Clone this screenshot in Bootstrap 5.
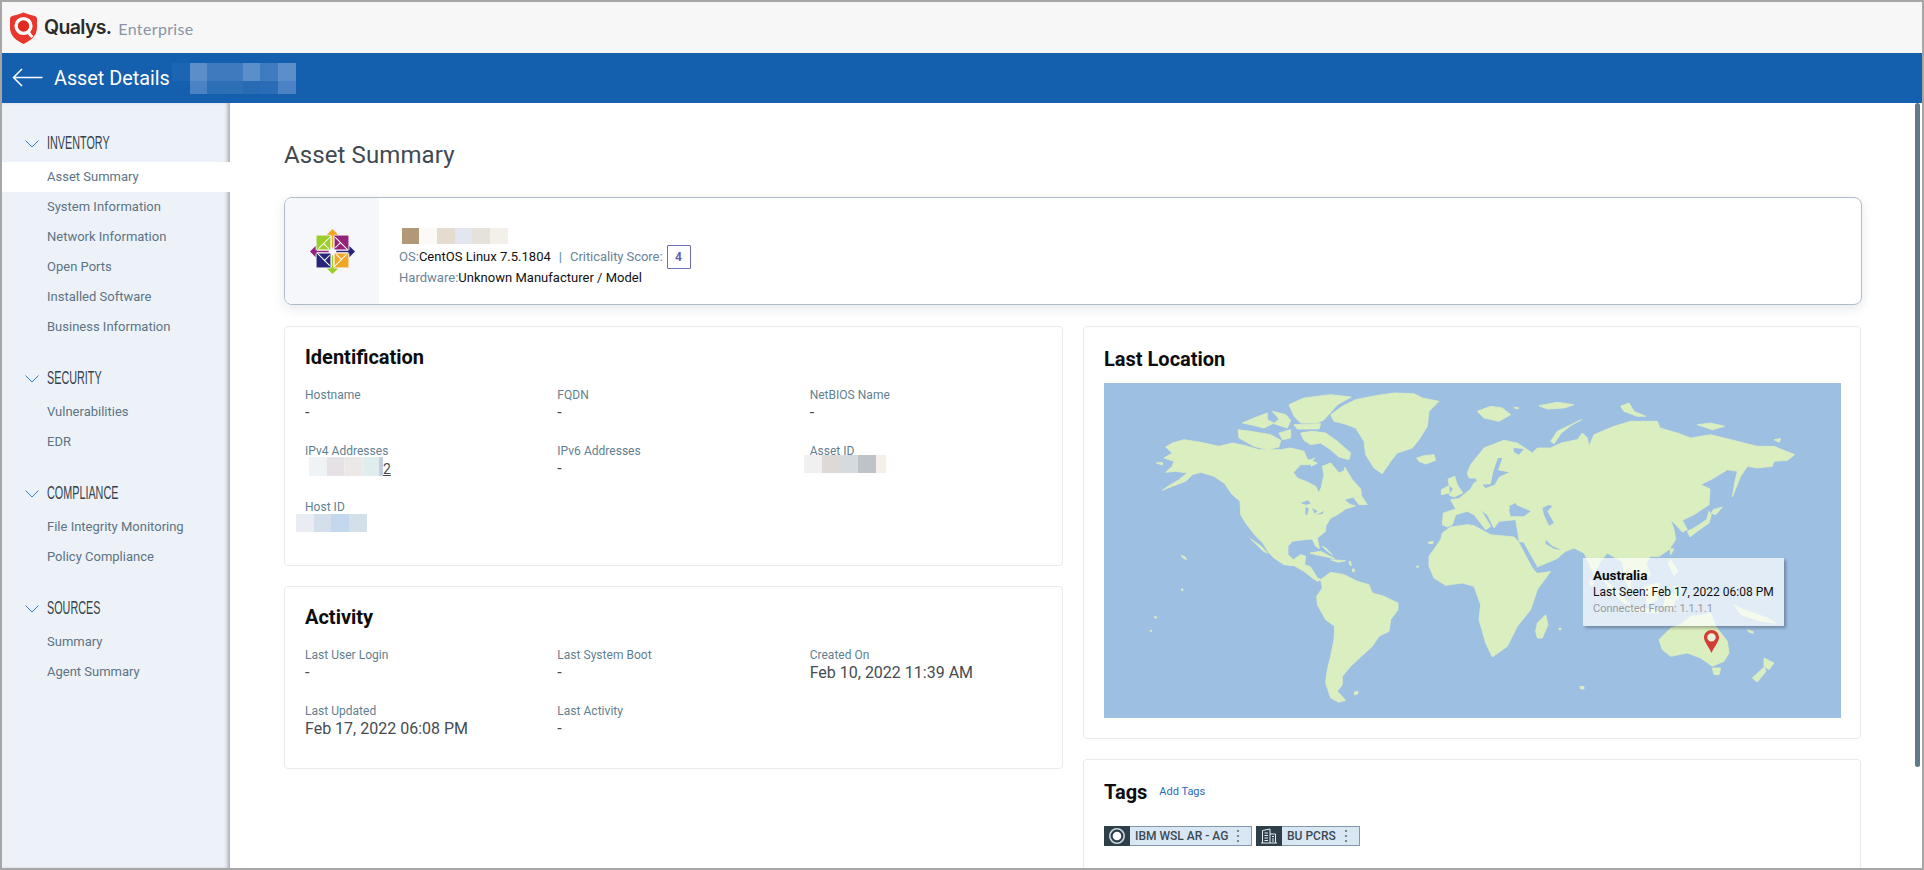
<!DOCTYPE html>
<html lang="en">
<head>
<meta charset="utf-8">
<title>Asset Details</title>
<link href="https://cdn.jsdelivr.net/npm/bootstrap@5.3.0/dist/css/bootstrap.min.css" rel="stylesheet">
<style>
html,body{height:100%;margin:0;overflow:hidden}
body{font-family:Roboto,"Liberation Sans",sans-serif;background:#fff}
.frame{height:870px;border:2px solid #a6a6a6;overflow:hidden;position:relative}
.topbar{height:51px;background:#f7f7f7;padding-left:8px}
.brand-q{font-family:Inter,"Liberation Sans",sans-serif;font-weight:600;font-size:19.5px;color:#2b2b2b;letter-spacing:-.65px;margin-left:7px}
.brand-e{font-family:Lato,"Liberation Sans",sans-serif;font-size:16px;color:#8a94a6;letter-spacing:.35px;margin-left:7px;margin-top:2px}
.bluebar{height:50px;background:#1560ae;padding-left:10px}
.bluebar h1{font-size:19.8px;font-weight:400;color:#fff;margin:0 0 0 11px;line-height:50px;padding-top:1px}
.bluebar .mos{margin-left:2px}
.shellrow{height:765px}
.sidemenu{width:228px;flex:0 0 228px;background:#edf2f9;box-shadow:inset -4px 0 4px -2px rgba(0,0,0,.32);padding-top:22px}
.sgroup{margin-bottom:18px}
.shead{height:37px;font-family:"Liberation Sans",sans-serif;font-size:18px;color:#33424c;padding-left:23px;gap:8px}
.shead span{display:inline-block;transform:scaleX(.6);transform-origin:left center;white-space:nowrap}
.sitem{display:block;height:30px;line-height:30px;font-size:13px;color:#5c7484;padding-left:45px;text-decoration:none}
.sitem.sactive{background:#fff}
.mainpane{flex:1 1 auto;padding:36px 0 0 54px;overflow:hidden;min-width:0}
.pagetitle{font-size:24px;font-weight:400;line-height:32px;color:#3f4a52;margin:0 0 26px;letter-spacing:.1px}
.hostcard{width:1578px;height:108px;border:1px solid #aebcc9;border-radius:8px;box-shadow:0 4px 12px rgba(0,30,60,.1);overflow:hidden;margin-bottom:21px;background:#fff}
.hostlogo{width:94px;flex:0 0 94px;background:#f6f7fa}
.hostinfo{padding:30px 0 0 20px;font-size:13px;letter-spacing:.02px}
.hostinfo .mos{display:block;margin-left:3px;margin-bottom:1px}
.hostline{height:22px;line-height:22px;color:#6a8399}
.hostline b{font-weight:400;color:#111}
.hostsep{color:#5a87ad;margin:0 8px 0 8px}
.hostcrit{letter-spacing:-.06px}
.critbox{display:inline-block;width:24px;height:24px;line-height:22px;border:1px solid #6a6fb8;border-radius:1px;text-align:center;color:#5c62b0;font-weight:700;margin-left:4px;font-size:12px}
.colleft{width:779px;flex:0 0 779px}
.colright{width:778px;flex:0 0 778px;margin-left:20px}
.panelcard{border:1px solid #e7eaee;border-radius:4px;margin-bottom:20px;padding:18px 0 0 20px;background:#fff}
.h240{height:240px}.h183{height:183px}
.paneltitle{font-size:20px;font-weight:700;line-height:24px;margin:0 0 18px;color:#0d0d0d}
.fieldbox{height:36px;margin-bottom:20px}
.flabel{font-size:12px;line-height:16px;color:#5f7f90;letter-spacing:.02px}
.fvalue{font-size:16px;line-height:20px;color:#454c52}
.fvalue u{font-size:14px}
.maskv4{margin-left:4px;margin-top:-2px;vertical-align:top}
.maskid{display:block;margin-left:-6px;margin-top:-4px}
.maskhost{display:block;margin-left:-9px;margin-top:-1px}
.locbody{padding-top:20px;padding-bottom:20px;height:413px}
.mapwrap{position:relative;width:737px;height:335px;margin-top:-6px;background:#9dbfe2}
.mapwrap>svg{display:block}
.landgroup{fill:#dbeec0;stroke:#dbeec0;stroke-width:2.5;stroke-linejoin:round}
.maptip{position:absolute;left:479px;top:175px;width:201px;height:68px;background:rgba(255,255,255,.7);box-shadow:2px 2px 3px rgba(0,0,0,.3);padding:8px 0 0 10px}
.tipname{font-size:13.5px;font-weight:700;line-height:18px;color:#0a0a0a}
.tipseen{font-size:12px;line-height:17px;color:#111}
.tipconn{font-size:11px;line-height:15px;color:#999}
.mappin{position:absolute;left:599.5px;top:247px}
.tagscard{height:140px;padding-top:20px}
.addlink{font-size:11px;color:#2a69b5;text-decoration:none;margin-left:12px}
.tagrow{margin-top:22px;gap:4px}
.tagpill{height:20px;border:1px solid #8397a8;background:#d9e7f5;font-size:12px;font-weight:500;color:#3c4a55;line-height:18px}
.tagicon{width:26px;height:20px;margin:-1px 5px -1px -1px;background:#2f3f4a}
.t1{width:148px}.t2{width:104px}
.thumb{position:absolute;right:2px;top:101px;width:5px;height:664px;background:#5f7a8a;border-radius:3px}
</style>
</head>
<body>
<div class="frame d-flex flex-column">
  <div class="topbar d-flex align-items-center">
    <svg width="27" height="32" viewBox="0 0 27 32" aria-label="Qualys"><path d="M2 4C6 3 10 2 13.5.5 17 2 21 3 25 4q2 1 2 3v9c0 8-7 13-13.5 16C7 29 0 24 0 16V7q0-2 2-3z" fill="#e8372c"/><circle cx="13.5" cy="14" r="7.4" fill="#e02a22" stroke="#fff" stroke-width="3.4"/><path d="M18 19.500c1 2 2.500 4 4.500 5.500" stroke="#fff" stroke-width="2.8" fill="none"/></svg>
    <span class="brand-q">Qualys.</span><span class="brand-e">Enterprise</span>
  </div>
  <div class="bluebar d-flex align-items-center">
    <svg width="31" height="20" viewBox="0 0 31 20"><path d="M30.5 9.500H1.500M10 1L1.500 9.500 10 18" fill="none" stroke="#fff" stroke-width="1.5"/></svg>
    <h1>Asset Details</h1>
    <svg class="mos" width="124" height="31" viewBox="0 0 124 31"><rect x="0" y="0" width="18" height="18" fill="#1b65b3"/><rect x="18" y="0" width="17" height="18" fill="#5c8fca"/><rect x="35" y="0" width="18" height="18" fill="#3f7abf"/><rect x="53" y="0" width="18" height="18" fill="#3f7abf"/><rect x="71" y="0" width="17" height="18" fill="#5b8fca"/><rect x="88" y="0" width="18" height="18" fill="#3f7bbf"/><rect x="106" y="0" width="18" height="18" fill="#5b8fca"/><rect x="18" y="18" width="17" height="13" fill="#4a82c3"/><rect x="35" y="18" width="18" height="13" fill="#2c6fb7"/><rect x="53" y="18" width="18" height="13" fill="#2d70b6"/><rect x="71" y="18" width="17" height="13" fill="#286bb5"/><rect x="88" y="18" width="18" height="13" fill="#2a6db6"/><rect x="106" y="18" width="18" height="13" fill="#4a82c3"/></svg>
  </div>
  <div class="shellrow d-flex">
    <nav class="sidemenu">
      <div class="sgroup">
        <div class="shead d-flex align-items-center"><svg width="14" height="8" viewBox="0 0 14 8"><path d="M.5.5L7 7l6.500-6.500" fill="none" stroke="#2f7fd0"/></svg><span>INVENTORY</span></div>
        <a class="sitem sactive" href="#">Asset Summary</a>
        <a class="sitem" href="#">System Information</a>
        <a class="sitem" href="#">Network Information</a>
        <a class="sitem" href="#">Open Ports</a>
        <a class="sitem" href="#">Installed Software</a>
        <a class="sitem" href="#">Business Information</a>
      </div>
      <div class="sgroup">
        <div class="shead d-flex align-items-center"><svg width="14" height="8" viewBox="0 0 14 8"><path d="M.5.5L7 7l6.500-6.500" fill="none" stroke="#2f7fd0"/></svg><span>SECURITY</span></div>
        <a class="sitem" href="#">Vulnerabilities</a>
        <a class="sitem" href="#">EDR</a>
      </div>
      <div class="sgroup">
        <div class="shead d-flex align-items-center"><svg width="14" height="8" viewBox="0 0 14 8"><path d="M.5.5L7 7l6.500-6.500" fill="none" stroke="#2f7fd0"/></svg><span>COMPLIANCE</span></div>
        <a class="sitem" href="#">File Integrity Monitoring</a>
        <a class="sitem" href="#">Policy Compliance</a>
      </div>
      <div class="sgroup">
        <div class="shead d-flex align-items-center"><svg width="14" height="8" viewBox="0 0 14 8"><path d="M.5.5L7 7l6.500-6.500" fill="none" stroke="#2f7fd0"/></svg><span>SOURCES</span></div>
        <a class="sitem" href="#">Summary</a>
        <a class="sitem" href="#">Agent Summary</a>
      </div>
    </nav>
    <main class="mainpane">
      <h2 class="pagetitle">Asset Summary</h2>
      <div class="hostcard d-flex">
        <div class="hostlogo d-flex align-items-center justify-content-center">
          <svg width="47" height="45" viewBox="0 0 48 48" aria-label="CentOS">
            <polygon points="24,0 30,6 26,6 26,20 22,20 22,6 18,6" fill="#efa724"/>
            <polygon points="48,24 42,30 42,26 28,26 28,22 42,22 42,18" fill="#262577"/>
            <polygon points="24,48 18,42 22,42 22,28 26,28 26,42 30,42" fill="#9ccd2a"/>
            <polygon points="0,24 6,18 6,22 20,22 20,26 6,26 6,30" fill="#932279"/>
            <rect x="7" y="7" width="15.5" height="15.5" fill="#9ccd2a"/>
            <rect x="25.5" y="7" width="15.5" height="15.5" fill="#932279"/>
            <rect x="7" y="25.5" width="15.5" height="15.5" fill="#262577"/>
            <rect x="25.5" y="25.5" width="15.5" height="15.5" fill="#efa724"/>
            <path d="M7 22.500h15.500V7M25.500 7v15.500H41M41 25.500H25.500V41M22.500 41V25.500H7" fill="none" stroke="#fff" stroke-width="1.4"/>
            <path d="M22 8L9 21M20 21l-6-6M40 22L27 9M27 20l6-6M26 40l13-13M28 27l6 6M8 26l13 13M21 28l-6 6" fill="none" stroke="#fff" stroke-width="1.1"/>
          </svg>
        </div>
        <div class="hostinfo">
          <svg class="mos" width="106" height="16" viewBox="0 0 106 16"><rect x="0" width="17" height="16" fill="#b09878"/><rect x="17" width="18" height="16" fill="#fbfaf7"/><rect x="35" width="18" height="16" fill="#e4dccf"/><rect x="53" width="17" height="16" fill="#e3e5f0"/><rect x="70" width="18" height="16" fill="#e6e2db"/><rect x="88" width="18" height="16" fill="#f3efe9"/></svg>
          <div class="hostline">OS:<b>CentOS Linux 7.5.1804</b><span class="hostsep">|</span><span class="hostcrit">Criticality Score:</span><span class="critbox">4</span></div>
          <div class="hostline">Hardware:<b>Unknown Manufacturer / Model</b></div>
        </div>
      </div>
      <div class="d-flex align-items-start">
        <div class="colleft">
          <section class="panelcard h240">
            <h3 class="paneltitle">Identification</h3>
            <div class="row g-0">
              <div class="col-4 fieldbox"><div class="flabel">Hostname</div><div class="fvalue">-</div></div>
              <div class="col-4 fieldbox"><div class="flabel">FQDN</div><div class="fvalue">-</div></div>
              <div class="col-4 fieldbox"><div class="flabel">NetBIOS Name</div><div class="fvalue">-</div></div>
              <div class="col-4 fieldbox"><div class="flabel">IPv4 Addresses</div><div class="fvalue"><svg class="maskv4" width="74" height="19" viewBox="0 0 75 19"><rect x="0" width="18" height="19" fill="#eff3f5"/><rect x="18" width="18" height="19" fill="#e6e1e5"/><rect x="36" width="18" height="19" fill="#ece8e8"/><rect x="54" width="17" height="19" fill="#dfedee"/><rect x="71" width="4" height="19" fill="#c4cbda"/></svg><u>2</u></div></div>
              <div class="col-4 fieldbox"><div class="flabel">IPv6 Addresses</div><div class="fvalue">-</div></div>
              <div class="col-4 fieldbox"><div class="flabel">Asset ID</div><svg class="maskid" width="82" height="18" viewBox="0 0 82 18"><rect x="0" width="18" height="18" fill="#f0f0f0"/><rect x="18" width="18" height="18" fill="#ded9d6"/><rect x="36" width="18" height="18" fill="#d4dadd"/><rect x="54" width="18" height="18" fill="#bec3ca"/><rect x="72" width="10" height="18" fill="#f4efe9"/></svg></div>
              <div class="col-4 fieldbox"><div class="flabel">Host ID</div><svg class="maskhost" width="71" height="18" viewBox="0 0 71 18"><rect x="0" width="18" height="18" fill="#eaecf3"/><rect x="18" width="17" height="18" fill="#d3e0ec"/><rect x="35" width="18" height="18" fill="#c3d8ec"/><rect x="53" width="18" height="18" fill="#d3e0ea"/></svg></div>
            </div>
          </section>
          <section class="panelcard h183">
            <h3 class="paneltitle">Activity</h3>
            <div class="row g-0">
              <div class="col-4 fieldbox"><div class="flabel">Last User Login</div><div class="fvalue">-</div></div>
              <div class="col-4 fieldbox"><div class="flabel">Last System Boot</div><div class="fvalue">-</div></div>
              <div class="col-4 fieldbox"><div class="flabel">Created On</div><div class="fvalue">Feb 10, 2022 11:39 AM</div></div>
              <div class="col-4 fieldbox"><div class="flabel">Last Updated</div><div class="fvalue">Feb 17, 2022 06:08 PM</div></div>
              <div class="col-4 fieldbox"><div class="flabel">Last Activity</div><div class="fvalue">-</div></div>
            </div>
          </section>
        </div>
        <div class="colright">
          <section class="panelcard locbody">
            <h3 class="paneltitle">Last Location</h3>
            <div class="mapwrap">
              <svg width="737" height="335" viewBox="0 0 2211 1005" preserveAspectRatio="none" aria-label="World map">
                <rect width="2211" height="1005" fill="#9dbfe2"/>
                <g class="landgroup">
                  <path d="M185 192L205 180 240 170 290 178 345 190 385 180 420 187 465 200 530 200 560 195 600 205 612 235 632 225 615 245 590 245 568 268 580 285 610 297 635 310 645 330 652 312 660 275 655 250 680 240 705 270 722 262 722 252 745 290 770 318 772 335 750 342 720 350 740 365 755 368 725 378 700 395 680 405 665 430 665 445 640 465 646 497 635 490 625 468 600 470 565 475 552 490 552 515 568 530 590 515 605 520 602 545 620 552 640 585 652 590 640 595 625 585 600 565 570 548 540 545 510 525 495 510 475 478 458 462 440 440 425 420 410 395 408 355 385 335 360 300 330 280 290 268 265 275 245 295 205 310 175 322 195 308 225 290 250 270 215 265 185 268 205 250 210 235 180 225 205 210Z"/>
                  <path d="M440 468L470 488 490 510 478 505 455 482Z"/>
                  <path d="M750 345L770 335 790 365 765 365Z"/>
                  <path d="M157 240L175 238 175 246Z"/>
                  <path d="M590 150L625 145 665 150 700 175 740 210 735 230 705 222 680 200 650 180 620 185 600 172Z"/>
                  <path d="M525 150L560 140 560 165 535 170Z"/>
                  <path d="M402 140L440 145 500 155 530 172 525 192 490 200 450 190 405 165Z"/>
                  <path d="M415 120L450 105 490 90 490 110 510 120 480 135 440 125Z"/>
                  <path d="M505 85L545 95 560 112 550 135 510 122 525 108Z"/>
                  <path d="M555 65L600 45 680 35 742 42 700 65 660 110 640 120 590 120 570 100Z"/>
                  <path d="M570 125L650 122 645 138 580 138Z"/>
                  <path d="M610 228L640 240 622 250Z"/>
                  <path d="M680 95L715 70 755 50 815 38 870 30 930 32 955 45 1005 55 975 85 970 130 945 170 925 195 880 210 860 235 835 272 810 255 785 215 780 175 755 135 720 122 690 115Z"/>
                  <path d="M938 225L960 218 990 215 995 232 965 243 945 235Z"/>
                  <path d="M618 510L650 505 692 527 660 520 635 515Z"/>
                  <path d="M680 530L725 533 702 538Z"/>
                  <path d="M655 490L665 495 685 515 670 505Z"/>
                  <path d="M232 517L245 523 247 530 236 524Z"/>
                  <path d="M735 535l5 0 2 12-4 0ZM745 558l6 0 0 8-5 0Z"/>
                  <path d="M152 700l6 2-1 4-5-2ZM232 618l5 0 0 5-4 0ZM138 742l5 0 0 3-5 0Z"/>
                  <path d="M650 590L680 568 720 575 760 595 795 605 805 630 840 640 882 660 882 680 860 710 855 745 825 760 805 790 770 822 740 850 715 880 715 905 700 925 725 952 705 958 680 945 665 900 670 860 680 820 690 770 692 730 665 710 640 665 638 640 655 615Z"/>
                  <path d="M750 928l12-4 0 8-10 4Z"/>
                  <path d="M1032 288L1052 280 1060 305 1076 330 1050 342 1035 336 1048 318 1035 305Z"/>
                  <path d="M1012 320L1035 308 1036 330 1012 335Z"/>
                  <path d="M972 478l15-3 0 6-12 1Z"/>
                  <path d="M938 549l5 0 0 4-5 0Z"/>
                  <g transform="translate(1110,0)">
                    <path d="M-92 390L-55 378-70 350-45 347-10 318 0 300 10 295 5 285-15 285-20 270-10 245 30 195 90 172 130 180 175 210 190 195 230 195 262 180 310 170 325 150 340 165 345 190 360 155 420 130 470 115 550 115 558 135 610 150 650 165 710 155 790 175 850 190 900 190 962 215 940 232 900 235 895 250 850 255 820 250 800 280 775 342 782 300 790 265 760 260 720 285 680 305 708 318 705 365 660 395 625 412 640 440 625 447 605 425 590 410 600 440 605 470 585 500 555 520 530 520 515 540 530 575 510 590 490 580 495 560 470 570 470 620 490 650 470 625 455 590 445 535 425 525 400 510 380 535 360 575 345 540 330 510 300 495 275 505 250 530 190 567 182 555 140 485 135 470 130 440 125 410 75 415 60 435 40 395 20 380 50 430 35 440 0 395-20 385-55 395-65 425-80 432-95 425Z"/>
                    <path d="M-95 450L-70 432-20 425 0 428 50 455 120 462 135 478 180 555 190 570 230 565 190 620 170 680 130 730 100 790 55 822 35 780 15 710 20 665 0 610-35 600-85 607-120 585-135 550-135 520-100 470Z"/>
                    <path d="M190 720L215 695 222 725 205 765 190 765 185 745Z"/>
                    <path d="M555 770L590 735 620 725 650 700 690 695 710 690 725 730 760 775 765 810 750 835 715 850 680 825 640 810 590 820 565 800Z"/>
                    <path d="M715 855L740 855 735 875 720 875Z"/>
                    <path d="M870 825L900 840 885 860 870 850Z"/>
                    <path d="M835 885L870 852 876 865 850 897Z"/>
                    <path d="M640 445L660 435 698 410 705 385 712 395 705 420 670 445 648 462Z"/>
                    <path d="M718 380L745 372 725 395 712 390Z"/>
                    <path d="M588 497L600 498 590 515Z"/>
                    <path d="M590 530L612 565 600 578 582 540Z"/>
                    <path d="M600 610L625 615 610 650Z"/>
                    <path d="M510 610L555 600 550 650 520 665Z"/>
                    <path d="M390 590L430 620 468 665 450 660 410 625Z"/>
                    <path d="M465 672L540 680 555 690 470 685Z"/>
                    <path d="M575 620L610 640 590 680 570 670Z"/>
                    <path d="M780 665L810 680 880 705 905 720 860 715 800 695Z"/>
                    <path d="M820 740l18 6 0 5-14-4ZM318 910l12 1 0 7-10 0ZM255 735l6 0 0 5-6 0Z"/>
                    <path d="M350 590l10 10-8 10-5-10Z"/>
                    <path d="M10 85L50 70 85 75 110 95 75 115 30 105Z"/>
                    <path d="M120 72L135 75 125 78Z"/>
                    <path d="M195 68L250 58 300 65 270 75 220 78Z"/>
                    <path d="M230 175L250 145 322 110 290 128 262 150 240 182Z"/>
                    <path d="M440 70L465 60 480 85 515 100 490 100 450 85Z"/>
                    <path d="M670 125L710 120 752 130 715 140Z"/>
                    <path d="M900 170L920 167 915 178Z"/>
                  </g>
                </g>
                <g fill="#9dbfe2">
                  <path d="M590 360L612 352 620 362 605 365Z"/>
                  <path d="M605 372L614 376 610 396 604 394Z"/>
                  <path d="M624 375L640 384 632 392Z"/>
                  <path d="M636 396L660 384 656 392Z"/>
                  <g transform="translate(1110,0)">
                    <path d="M25 305L50 303 58 265 72 225 85 225 72 262 105 268 75 282 62 305 35 315Z"/>
                    <path d="M105 380L125 365 170 385 150 400 110 400Z"/>
                    <path d="M205 375L225 365 235 370 220 385 240 420 225 428 210 395Z"/>
                    <path d="M215 470L235 490 262 500 240 497 215 482Z"/>
                    <path d="M105 370L125 360 130 372 110 382Z"/>
                    <path d="M135 478L148 478 190 552 178 558Z"/>
                    <path d="M178 558L250 528 272 508 258 535 234 563 190 570Z"/>
                    <path d="M118 195L150 198 135 215 120 208Z"/>
                  </g>
                </g>
              </svg>
              <div class="maptip">
                <div class="tipname">Australia</div>
                <div class="tipseen">Last Seen: Feb 17, 2022 06:08 PM</div>
                <div class="tipconn">Connected From: 1.1.1.1</div>
              </div>
              <svg class="mappin" width="15" height="23" viewBox="0 0 15 23" aria-label="Pin"><path d="M7.5 0C3.400 0 0 3.300 0 7.400c0 4 4.500 8.600 7.500 15.600C10.500 16 15 11.400 15 7.400 15 3.300 11.600 0 7.500 0z" fill="#d43d36"/><circle cx="7.5" cy="7.4" r="4.2" fill="#e8f3da"/></svg>
            </div>
          </section>
          <section class="panelcard tagscard">
            <div class="d-flex align-items-center"><h3 class="paneltitle m-0">Tags</h3><a class="addlink" href="#">Add Tags</a></div>
            <div class="tagrow d-flex">
              <div class="tagpill t1 d-flex align-items-center">
                <span class="tagicon d-flex align-items-center justify-content-center"><svg width="18" height="18" viewBox="0 0 18 18"><circle cx="9" cy="9" r="7.2" fill="none" stroke="#c9d6e2" stroke-width="1.6"/><circle cx="9" cy="9" r="4.3" fill="#fff"/></svg></span>IBM WSL AR - AG
                <svg class="ms-auto" width="20" height="14" viewBox="0 0 20 14"><g fill="#55636f"><circle cx="7" cy="2" r="1"/><circle cx="7" cy="7" r="1"/><circle cx="7" cy="12" r="1"/></g></svg>
              </div>
              <div class="tagpill t2 d-flex align-items-center">
                <span class="tagicon d-flex align-items-center justify-content-center"><svg width="16" height="16" viewBox="0 0 16 16" fill="none" stroke="#e6eef6" stroke-width="1"><path d="M1.5 15V2.500L9 1v14M9 6h5.500v9M0 15h16M3.500 5h3.500M3.500 7.500h3.500M3.500 10h3.500M3.500 12.500h3.500M11 8.500h2M11 11h2M11 13h2"/></svg></span>BU PCRS
                <svg class="ms-auto" width="20" height="14" viewBox="0 0 20 14"><g fill="#55636f"><circle cx="7" cy="2" r="1"/><circle cx="7" cy="7" r="1"/><circle cx="7" cy="12" r="1"/></g></svg>
              </div>
            </div>
          </section>
        </div>
      </div>
    </main>
  </div>
  <div class="thumb"></div>
</div>
<script src="https://cdn.jsdelivr.net/npm/bootstrap@5.3.0/dist/js/bootstrap.bundle.min.js"></script>
</body>
</html>
